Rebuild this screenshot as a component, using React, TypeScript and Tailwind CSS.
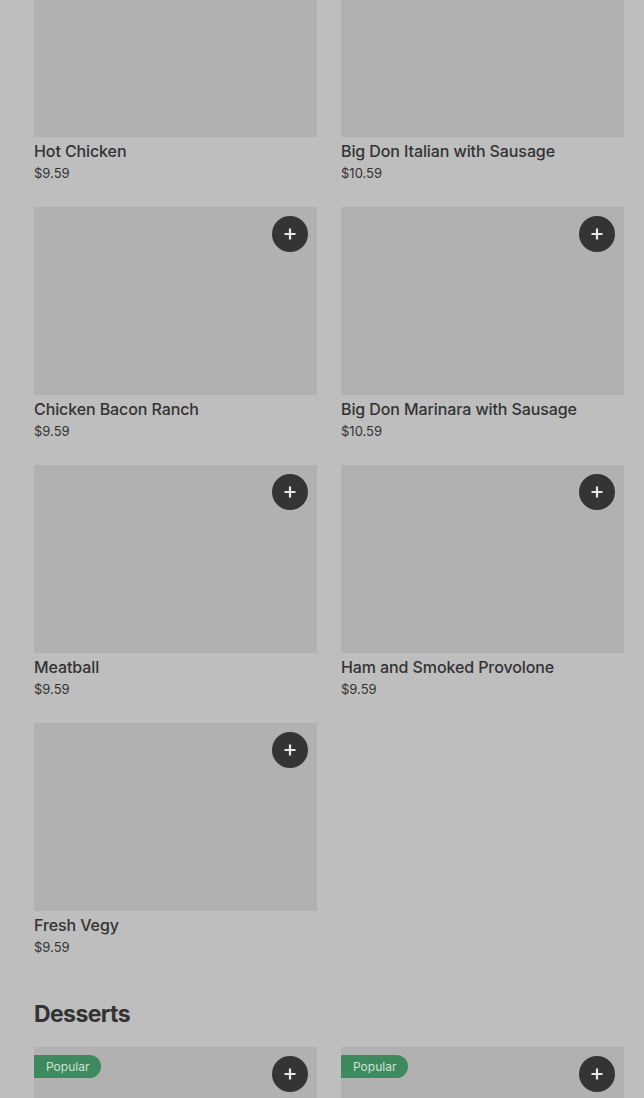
import React from "react";

type Item = { name: string; price: string; popular?: boolean };

const Plus = () => (
  <svg width="14" height="14" viewBox="0 0 14 14" fill="none">
    <path d="M7 1.5v11M1.5 7h11" stroke="#e6e6e6" strokeWidth="2.2" />
  </svg>
);

function Card({ item, first, noText }: { item: Item; first?: boolean; noText?: boolean }) {
  return (
    <div className="flex flex-col">
      <div className="relative h-[188px] bg-[#b1b1b1]">
        {item.popular && (
          <div className="absolute left-0 top-[8px] h-[23px] pl-[12px] pr-[12px] rounded-r-full bg-[#3e8a5e] text-[#cfe1d5] text-[12px] leading-[23px]">
            Popular
          </div>
        )}
        {!first && (
          <div className="absolute right-[9px] top-[9px] w-[36px] h-[36px] rounded-full bg-[#343434] flex items-center justify-center">
            <Plus />
          </div>
        )}
      </div>
      {!noText && (
        <div className="pt-[4px] h-[70px]">
          <div className="text-[16px] leading-[20px] text-[#333333] font-medium tracking-[-0.1px]">{item.name}</div>
          <div className="text-[13px] leading-[16px] mt-[4px] text-[#333333]">{item.price}</div>
        </div>
      )}
    </div>
  );
}

export default function App() {
  const rows: Item[][] = [
    [
      { name: "Hot Chicken", price: "$9.59" },
      { name: "Big Don Italian with Sausage", price: "$10.59" },
    ],
    [
      { name: "Chicken Bacon Ranch", price: "$9.59" },
      { name: "Big Don Marinara with Sausage", price: "$10.59" },
    ],
    [
      { name: "Meatball", price: "$9.59" },
      { name: "Ham and Smoked Provolone", price: "$9.59" },
    ],
    [{ name: "Fresh Vegy", price: "$9.59" }],
  ];
  return (
    <div
      className="w-[644px] h-[1098px] overflow-hidden bg-[#bebebe]"
      style={{ fontFamily: "Inter, 'Noto Sans', sans-serif" }}
    >
      <div className="-mt-[51px] pl-[34px] pr-[20px]">
        <div className="grid grid-cols-2 gap-x-[24px]">
          {rows.map((r, i) =>
            [0, 1].map((j) =>
              r[j] ? <Card key={i + "-" + j} item={r[j]} first={i === 0} /> : <div key={i + "-" + j} />
            )
          )}
        </div>
        <div className="pt-[18px] pb-[18px] text-[23px] leading-[30px] font-bold text-[#333333] tracking-[-0.6px]">
          Desserts
        </div>
        <div className="grid grid-cols-2 gap-x-[24px]">
          <Card item={{ name: "", price: "", popular: true }} noText />
          <Card item={{ name: "", price: "", popular: true }} noText />
        </div>
      </div>
    </div>
  );
}
